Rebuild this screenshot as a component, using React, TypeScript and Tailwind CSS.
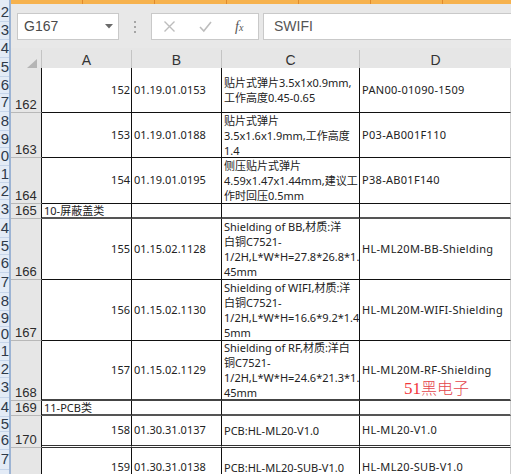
import React from 'react';

const cellFont = { fontFamily: '"Noto Sans","Noto Sans CJK SC",sans-serif' };
const wideFont = { fontFamily: '"Noto Sans","Noto Sans CJK SC",sans-serif', letterSpacing: '0.3px' };
const uiFont = { fontFamily: '"Liberation Sans","Noto Sans CJK SC",sans-serif' };

// left strip of the neighbouring window: digits and their heights
const stripRows: [string, number][] = [
  ['2', 18], ['3', 18], ['4', 18], ['5', 19], ['6', 17], ['7', 18], ['8', 19], ['9', 17], ['0', 18],
  ['1', 17], ['2', 17], ['3', 19], ['4', 19], ['5', 17], ['6', 18], ['7', 20], ['8', 18], ['9', 16],
  ['0', 16], ['1', 18], ['2', 17], ['3', 20], ['4', 19], ['5', 15], ['6', 18], ['7', 20],
];

interface Row {
  num: number;
  h: string;
  a?: string;
  b?: string;
  c?: string[];
  d?: string;
  group?: string;
  line: string;
}

const rows: Row[] = [
  { num: 162, h: 'h-[45px]', a: '152', b: '01.19.01.0153', c: ['贴片式弹片3.5x1x0.9mm,', '工作高度0.45-0.65'], d: 'PAN00-01090-1509', line: 'border-b border-b-[#111]' },
  { num: 163, h: 'h-[45px]', a: '153', b: '01.19.01.0188', c: ['贴片式弹片', '3.5x1.6x1.9mm,工作高度', '1.4'], d: 'P03-AB001F110', line: 'border-b border-b-[#111]' },
  { num: 164, h: 'h-[46px]', a: '154', b: '01.19.01.0195', c: ['侧压贴片式弹片', '4.59x1.47x1.44mm,建议工', '作时回压0.5mm'], d: 'P38-AB01F140', line: 'border-b border-b-[#111]' },
  { num: 165, h: 'h-[15px]', group: '10-屏蔽盖类', line: 'border-b-2 border-b-[#555]' },
  { num: 166, h: 'h-[61px]', a: '155', b: '01.15.02.1128', c: ['Shielding of BB,材质:洋', '白铜C7521-', '1/2H,L*W*H=27.8*26.8*1.', '45mm'], d: 'HL-ML20M-BB-Shielding', line: 'border-b border-b-[#111]' },
  { num: 167, h: 'h-[61px]', a: '156', b: '01.15.02.1130', c: ['Shielding of WIFI,材质:洋', '白铜C7521-', '1/2H,L*W*H=16.6*9.2*1.4', '5mm'], d: 'HL-ML20M-WIFI-Shielding', line: 'border-b border-b-[#111]' },
  { num: 168, h: 'h-[60px]', a: '157', b: '01.15.02.1129', c: ['Shielding of RF,材质:洋白', '铜C7521-', '1/2H,L*W*H=24.6*21.3*1.', '45mm'], d: 'HL-ML20M-RF-Shielding', line: 'border-b-2 border-b-[#444]' },
  { num: 169, h: 'h-[15px]', group: '11-PCB类', line: 'border-b-2 border-b-[#555]' },
  { num: 170, h: 'h-[32px]', a: '158', b: '01.30.31.0137', c: ['PCB:HL-ML20-V1.0'], d: 'HL-ML20-V1.0', line: 'border-b-[3px] border-double border-b-[#333]' },
  { num: 171, h: 'h-[40px]', a: '159', b: '01.30.31.0138', c: ['PCB:HL-ML20-SUB-V1.0'], d: 'HL-ML20-SUB-V1.0', line: 'border-b border-b-[#111]' },
];

function DataRow({ r }: { r: Row }) {
  return (
    <div className={`grid grid-cols-[31px_90px_90px_138px_151px] ${r.h} shrink-0`}>
      <div className="bg-[#e6e6e6] border-r border-r-[#111] border-b border-b-[#b8b8b8] flex items-end pl-[4px] overflow-hidden">
        <span className="text-[13px] leading-[14px] text-[#2b2b2b]" style={uiFont}>{r.num}</span>
      </div>
      {r.group ? (
        <div className={`border-r border-r-[#111] ${r.line} flex items-center pl-[2px] whitespace-nowrap text-[11px] leading-[13px] text-[#222]`} style={cellFont}>
          {r.group}
        </div>
      ) : (
        <div className={`border-r border-r-[#111] ${r.line} flex items-center justify-end pr-[1px] text-[11px] text-[#222]`} style={cellFont}>
          {r.a}
        </div>
      )}
      <div className={`border-r border-r-[#111] ${r.line} flex items-center pl-[2px] text-[11px] text-[#222]`} style={cellFont}>
        {r.b}
      </div>
      <div className={`border-r border-r-[#111] ${r.line} flex flex-col justify-center pl-[2px] text-[11px] leading-[15px] text-[#222] whitespace-nowrap overflow-hidden`} style={cellFont}>
        {r.c?.map((t, i) => <span key={i}>{t}</span>)}
      </div>
      <div className={`border-r border-r-[#cfcfcf] ${r.line} flex items-center pl-[2px] text-[11px] text-[#222] whitespace-nowrap`} style={wideFont}>
        {r.d}
      </div>
    </div>
  );
}

export default function App() {
  return (
    <div className="w-[511px] h-[474px] flex overflow-hidden bg-white">
      {/* neighbouring window row numbers */}
      <div className="w-[11px] shrink-0 bg-[#e3ebf6] border-r-2 border-r-[#9db4d4] pt-[4px] flex flex-col overflow-hidden">
        {stripRows.map(([d, h], i) => (
          <div
            key={i}
            style={{ height: h, ...uiFont }}
            className="shrink-0 flex items-center justify-end text-[15px] text-[#2e3a4a] border-b border-b-[#c6d5ea] overflow-hidden"
          >
            {d}
          </div>
        ))}
      </div>

      <div className="w-[500px] shrink-0 flex flex-col relative">
        {/* orange tab strip */}
        <div className="h-[4px] flex bg-[#f6b24e] shrink-0">
          {[0, 1, 2, 3, 4, 5, 6].map((i) => (
            <div key={i} className="w-[72px] shrink-0 border-r border-r-[#e08a2c]" />
          ))}
        </div>

        {/* formula bar */}
        <div className="h-[44px] bg-[#e8e8e8] flex items-start pt-[9px] pl-[6px] shrink-0" style={uiFont}>
          <div className="w-[102px] h-[27px] bg-white border border-[#c9c9c9] flex items-center pl-[6px] pr-[5px] justify-between">
            <span className="text-[14px] text-[#4a4a4a]">G167</span>
            <svg width="8" height="5" viewBox="0 0 8 5"><path d="M0 0 L8 0 L4 4.5 Z" fill="#6a6a6a" /></svg>
          </div>
          <div className="w-[32px] h-[27px] flex flex-col items-center justify-center gap-[3px]">
            <span className="w-[2px] h-[2px] bg-[#a5a5a5]" />
            <span className="w-[2px] h-[2px] bg-[#a5a5a5]" />
            <span className="w-[2px] h-[2px] bg-[#a5a5a5]" />
          </div>
          <div className="w-[108px] h-[27px] bg-white border border-[#c9c9c9] flex items-center pl-[11px] gap-[23px]">
            <svg width="13" height="13" viewBox="0 0 13 13">
              <path d="M1.5 1.5 L11.5 11.5 M11.5 1.5 L1.5 11.5" stroke="#bdbdbd" strokeWidth="1.4" fill="none" />
            </svg>
            <svg width="13" height="13" viewBox="0 0 13 13">
              <path d="M1 7 L4.8 11 L12 2" stroke="#bdbdbd" strokeWidth="1.6" fill="none" />
            </svg>
            <span className="italic text-[14px] text-[#555] leading-none" style={{ fontFamily: '"Liberation Serif",serif' }}>
              f<span className="text-[10px]">x</span>
            </span>
          </div>
          <div className="ml-[4px] flex-1 h-[27px] bg-white border border-[#c9c9c9] border-r-0 flex items-center pl-[10px]">
            <span className="text-[14px] text-[#555]">SWIFI</span>
          </div>
        </div>

        {/* column headers */}
        <div className="grid grid-cols-[31px_90px_90px_138px_151px] h-[20px] bg-[#e6e6e6] shrink-0 text-[14px] text-[#333]" style={uiFont}>
          <div className="border-r border-r-[#c4c4c4] flex items-end justify-end pr-[4px] pb-[3px] mt-[2px]">
            <svg width="10" height="9" viewBox="0 0 10 9"><path d="M10 0 L10 9 L0 9 Z" fill="#b5b5b5" /></svg>
          </div>
          <div className="border-r border-r-[#c4c4c4] flex items-center justify-center mt-[2px]">A</div>
          <div className="border-r border-r-[#c4c4c4] flex items-center justify-center mt-[2px]">B</div>
          <div className="border-r border-r-[#c4c4c4] flex items-center justify-center mt-[2px]">C</div>
          <div className="flex items-center justify-center mt-[2px]">D</div>
        </div>

        {rows.map((r) => (
          <DataRow key={r.num} r={r} />
        ))}

        {/* watermark */}
        <div className="absolute left-[393px] top-[377px] text-[17px] leading-[20px] flex items-baseline">
          <span className="text-[#f2383a]" style={{ fontFamily: '"Liberation Serif",serif' }}>51</span>
          <span className="text-[#e4454c] text-[16px]" style={{ fontFamily: '"Noto Sans CJK SC",sans-serif', fontWeight: 300 }}>黑电子</span>
        </div>
      </div>
    </div>
  );
}
